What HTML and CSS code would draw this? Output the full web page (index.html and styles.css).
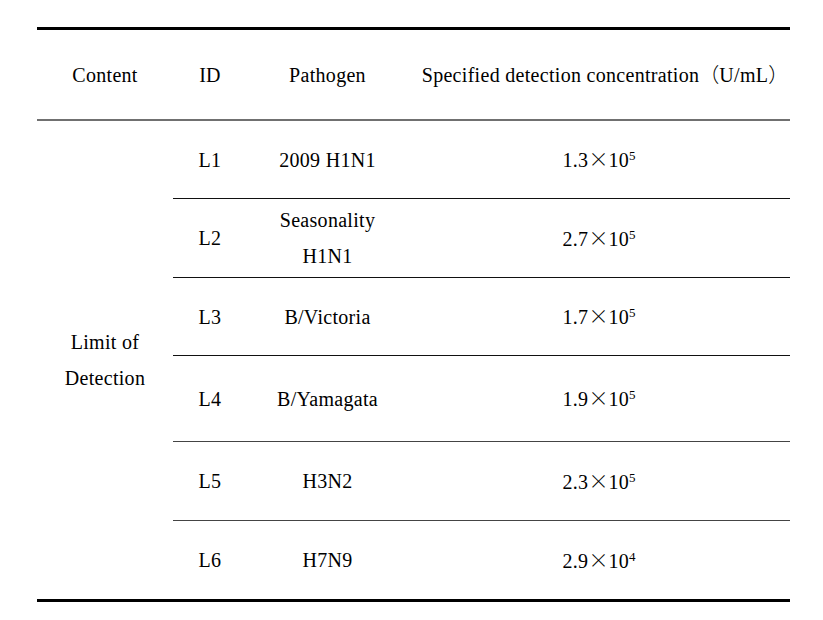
FILE: index.html
```html
<!DOCTYPE html>
<html lang="en">
<head>
<meta charset="utf-8">
<title>Limit of Detection</title>
<link rel="stylesheet" href="styles.css">
</head>
<body>
<table class="lod">
  <colgroup>
    <col class="c-content">
    <col class="c-id">
    <col class="c-path">
    <col class="c-conc">
  </colgroup>
  <thead>
    <tr>
      <th>Content</th>
      <th>ID</th>
      <th>Pathogen</th>
      <th class="conc-head">Specified detection concentration<span class="cjk">（</span>U/mL<span class="cjk">）</span></th>
    </tr>
  </thead>
  <tbody>
    <tr class="r1">
      <td rowspan="6" class="group">Limit of<br>Detection</td>
      <td>L1</td>
      <td>2009 H1N1</td>
      <td>1.3<span class="x">×</span>10<sup>5</sup></td>
    </tr>
    <tr class="r2">
      <td>L2</td>
      <td class="two">Seasonality<br>H1N1</td>
      <td>2.7<span class="x">×</span>10<sup>5</sup></td>
    </tr>
    <tr class="r3">
      <td>L3</td>
      <td>B/Victoria</td>
      <td>1.7<span class="x">×</span>10<sup>5</sup></td>
    </tr>
    <tr class="r4">
      <td>L4</td>
      <td>B/Yamagata</td>
      <td>1.9<span class="x">×</span>10<sup>5</sup></td>
    </tr>
    <tr class="r5">
      <td>L5</td>
      <td>H3N2</td>
      <td>2.3<span class="x">×</span>10<sup>5</sup></td>
    </tr>
    <tr class="r6">
      <td>L6</td>
      <td>H7N9</td>
      <td>2.9<span class="x">×</span>10<sup>4</sup></td>
    </tr>
  </tbody>
</table>
</body>
</html>
```

FILE: styles.css
```css
html, body {
  margin: 0;
  padding: 0;
  background: #ffffff;
}

body {
  font-family: "Liberation Serif", "Noto Sans CJK SC", serif;
  font-size: 20px;
  color: #000000;
}

.lod {
  margin: 27px 0 0 37px;
  width: 753px;
  border-collapse: separate;
  border-spacing: 0;
  table-layout: fixed;
  letter-spacing: 0.3px;
}

.c-content { width: 136px; }
.c-id { width: 74px; }
.c-path { width: 161px; }
.c-conc { width: 382px; }

.lod th,
.lod td {
  padding: 0;
  text-align: center;
  vertical-align: middle;
  font-weight: normal;
  box-sizing: border-box;
  line-height: 36px;
}

.lod th {
  height: 94px;
  border-top: 3px solid #000000;
  border-bottom: 2px solid #707070;
}

.lod th.conc-head {
  padding-left: 12px;
}

.lod td {
  border-bottom: 1px solid #111111;
}

.lod td.group {
  border-bottom: 3px solid #000000;
}

.r1 td { height: 78px; }
.r2 td { height: 79px; }
.r3 td { height: 78px; }
.r4 td { height: 86px; border-bottom-color: #444444; }
.r5 td { height: 79px; border-bottom-color: #444444; }
.r6 td { height: 81px; border-bottom: 3px solid #000000; }

.cjk {
  font-family: "Noto Sans CJK SC", sans-serif;
  font-weight: 300;
  letter-spacing: 0;
}

.x {
  font-family: "Noto Sans CJK SC", sans-serif;
  font-feature-settings: "fwid";
  font-weight: 300;
  letter-spacing: 0;
}

.lod sup {
  font-size: 13px;
  line-height: 0;
  vertical-align: 7px;
  letter-spacing: 0;
}
```
